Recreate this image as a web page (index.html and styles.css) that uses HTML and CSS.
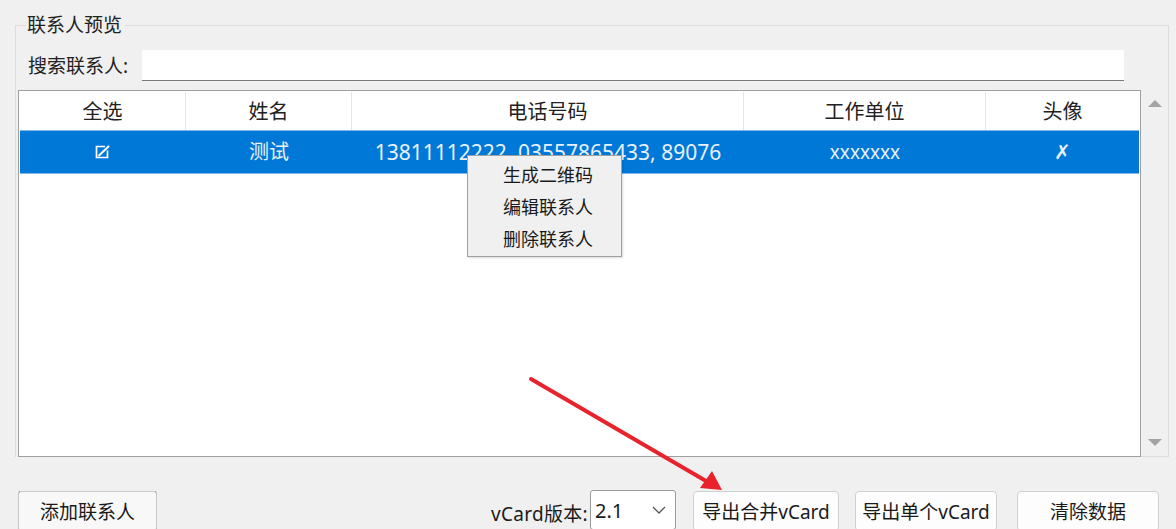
FILE: index.html
```html
<!DOCTYPE html>
<html lang="zh-CN">
<head>
    <meta charset="UTF-8">
    <title>联系人预览</title>
    <link rel="stylesheet" href="styles.css">
</head>
<body>
    <fieldset class="group">
        <legend>联系人预览</legend>
        <div class="search-row">
            <label for="search">搜索联系人:</label>
            <input type="text" id="search">
        </div>
        <div class="table-area">
            <div class="table-box">
                <div class="row head">
                    <div class="cell c1">全选</div>
                    <div class="cell c2">姓名</div>
                    <div class="cell c3">电话号码</div>
                    <div class="cell c4">工作单位</div>
                    <div class="cell c5">头像</div>
                </div>
                <div class="row selected">
                    <div class="cell c1">
                        <svg class="check" width="16" height="14" viewBox="0 0 16 14">
                            <path d="M10 1.5H1.5V12.5H12.5V5.5" fill="none" stroke="#fff" stroke-width="1.7"/>
                            <path d="M3.5 11L14 1" fill="none" stroke="#fff" stroke-width="2"/>
                        </svg>
                    </div>
                    <div class="cell c2">测试</div>
                    <div class="cell c3">13811112222, 03557865433, 89076</div>
                    <div class="cell c4">xxxxxxx</div>
                    <div class="cell c5">✗</div>
                </div>
            </div>
            <div class="scrollbar">
                <span class="arrow up"></span>
                <span class="arrow down"></span>
            </div>
        </div>
    </fieldset>

    <div class="bottom-bar">
        <button class="btn add">添加联系人</button>
        <div class="right-tools">
            <span class="version-label">vCard版本:</span>
            <div class="combo">
                <span>2.1</span>
                <svg width="14" height="8" viewBox="0 0 14 8"><path d="M1 1L7 7L13 1" fill="none" stroke="#555" stroke-width="1.3"/></svg>
            </div>
            <button class="btn merge">导出合并vCard</button>
            <button class="btn single">导出单个vCard</button>
            <button class="btn clear">清除数据</button>
        </div>
    </div>

    <div class="context-menu">
        <div class="menu-item">生成二维码</div>
        <div class="menu-item">编辑联系人</div>
        <div class="menu-item">删除联系人</div>
    </div>

    <svg class="annotation" width="1176" height="529" viewBox="0 0 1176 529">
        <line x1="531" y1="379" x2="706" y2="481" stroke="#e8232b" stroke-width="4" stroke-linecap="round"/>
        <polygon points="722,490 700,488 712,471" fill="#e8232b"/>
    </svg>
</body>
</html>
```

FILE: styles.css
```css
body {
    margin: 0;
    padding: 0;
    width: 1176px;
    height: 529px;
    overflow: hidden;
    background-color: #f0f0f0;
    font-family: "Noto Sans", "Noto Sans CJK SC", sans-serif;
    color: #1a1a1a;
    position: relative;
}
.group {
    margin: 14px 7px 0 15px;
    padding: 14px 0 0 2px;
    border: 1px solid #dcdcdc;
    border-bottom: none;
    min-width: 0;
}
.group legend {
    margin-left: 8px;
    padding: 0 3px 0 1px;
    font-size: 19px;
    line-height: 22px;
    color: #222;
}
.search-row {
    display: flex;
    align-items: center;
    height: 31px;
}
.search-row label {
    margin-left: 10px;
    width: 114px;
    font-size: 19px;
    line-height: 22px;
    color: #222;
}
.search-row input {
    width: 982px;
    height: 31px;
    box-sizing: border-box;
    border: none;
    border-bottom: 1px solid #7a7a7a;
    background: #fff;
    outline: none;
    border-radius: 2px 2px 0 0;
}
.table-area {
    display: flex;
    margin-top: 9px;
    height: 367px;
}
.table-box {
    width: 1123px;
    box-sizing: border-box;
    border: 1px solid #a0a0a0;
    padding: 1px;
    background: #fff;
}
.row {
    display: flex;
}
.cell {
    text-align: center;
    box-sizing: border-box;
    white-space: nowrap;
    overflow: hidden;
}
.c1 { width: 166px; }
.c2 { width: 166px; }
.c3 { width: 392px; }
.c4 { width: 242px; }
.c5 { width: 153px; }
.head .cell {
    height: 38px;
    line-height: 40px;
    font-size: 20px;
    color: #222;
    border-right: 1px solid #e5e5e5;
}
.head .c5 {
    border-right: none;
}
.selected {
    background-color: #0078d7;
    border-top: 1px solid #7fb8e8;
    border-bottom: 1px solid #7fb8e8;
    height: 44px;
    box-sizing: border-box;
}
.selected .cell {
    line-height: 42px;
    font-size: 20px;
    color: #e8f1fb;
}
.selected .c3 {
    font-size: 21px;
}
.selected .c4 {
    font-size: 19px;
}
.check {
    vertical-align: middle;
    margin-top: -4px;
}
.scrollbar {
    flex: 1;
    display: flex;
    flex-direction: column;
    justify-content: space-between;
    align-items: center;
    padding: 10px 0 10px;
    border-bottom: 1px solid #dcdcdc;
}
.arrow {
    width: 0;
    height: 0;
    border-left: 7px solid transparent;
    border-right: 7px solid transparent;
}
.arrow.up {
    border-bottom: 7px solid #a3a3a3;
}
.arrow.down {
    border-top: 7px solid #a3a3a3;
}
.bottom-bar {
    display: flex;
    justify-content: space-between;
    margin-top: 34px;
    padding: 0 17px 0 18px;
}
.right-tools {
    display: flex;
    align-items: flex-start;
}
.btn {
    height: 40px;
    box-sizing: border-box;
    background: #fdfdfd;
    border: 1px solid #d0d0d0;
    border-radius: 4px;
    font-family: "Noto Sans", "Noto Sans CJK SC", sans-serif;
    font-size: 19px;
    color: #1a1a1a;
    padding: 0;
    line-height: 40px;
}
.btn.add {
    width: 139px;
    border: 1px dotted #333;
    outline: 1px solid #c8c8c8;
    outline-offset: -1px;
    border-radius: 3px;
    background: #f8f8f8;
}
.version-label {
    font-size: 19px;
    line-height: 22px;
    margin-top: 12px;
    margin-right: 2px;
    letter-spacing: 0.3px;
}
.combo {
    width: 86px;
    height: 40px;
    box-sizing: border-box;
    border: 1px solid #9a9a9a;
    border-radius: 3px;
    background: #fff;
    display: flex;
    align-items: center;
    justify-content: space-between;
    padding: 0 9px 0 4px;
    font-size: 20px;
    margin-top: -1px;
}
.btn.merge {
    width: 146px;
    margin-left: 17px;
}
.btn.single {
    width: 142px;
    margin-left: 16px;
}
.btn.clear {
    width: 142px;
    margin-left: 20px;
}
.context-menu {
    position: absolute;
    left: 467px;
    top: 155px;
    width: 155px;
    box-sizing: border-box;
    background: #f0f0f0;
    border: 1px solid #a0a0a0;
    padding: 3px 0 1px;
    box-shadow: 1px 1px 2px rgba(0, 0, 0, 0.15);
}
.menu-item {
    height: 32px;
    line-height: 32px;
    padding-left: 35px;
    font-size: 18px;
    color: #1a1a1a;
}
.annotation {
    position: absolute;
    left: 0;
    top: 0;
    pointer-events: none;
}
```
